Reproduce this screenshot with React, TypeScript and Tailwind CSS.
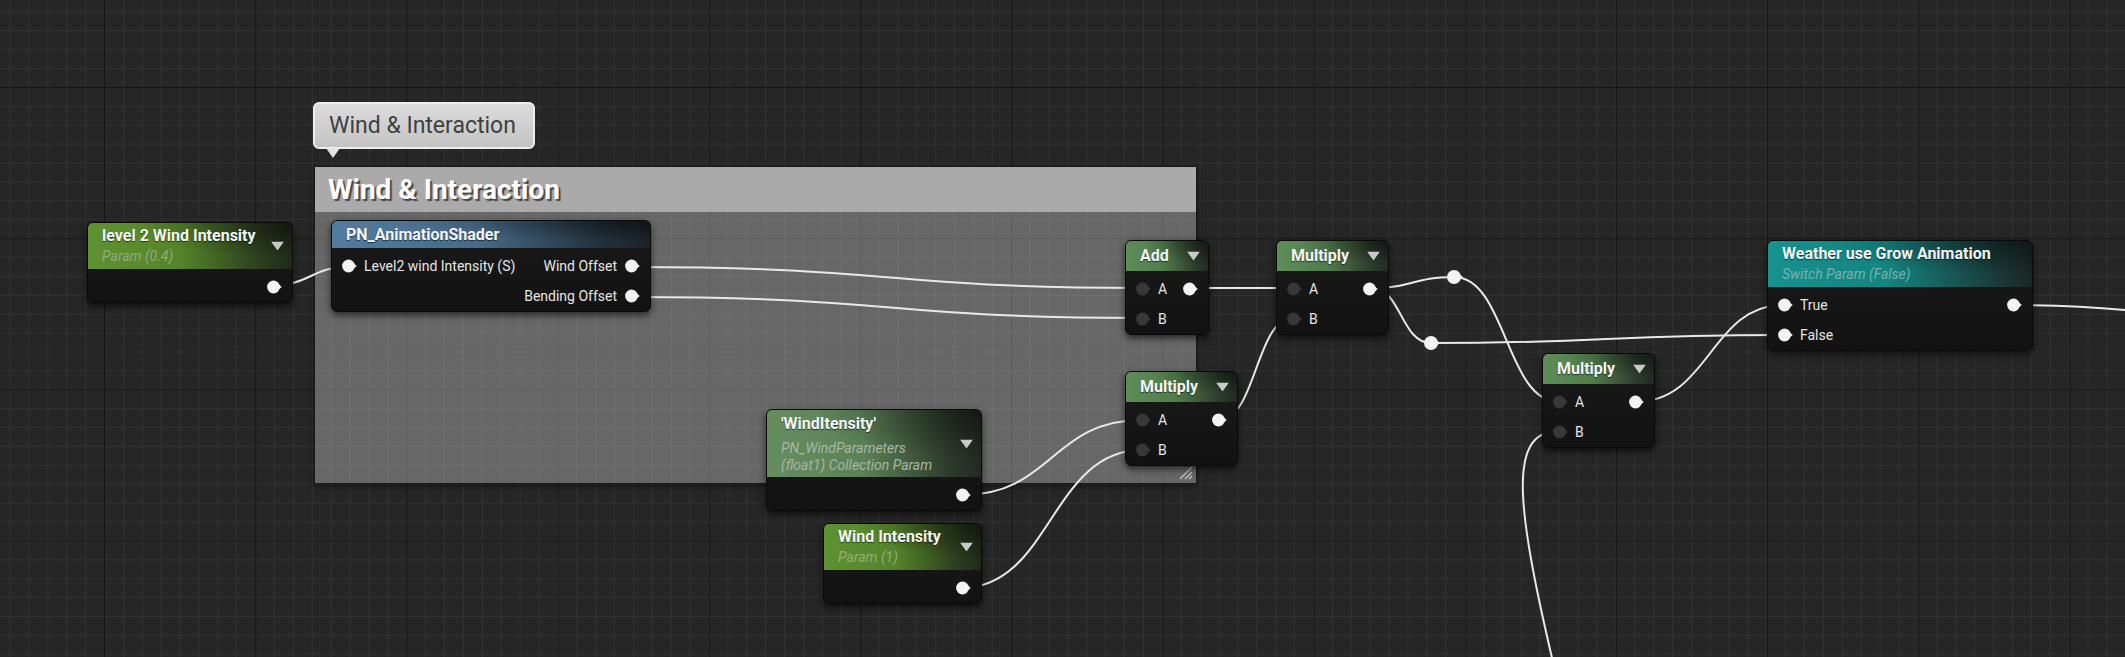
import React from "react"

type Pin = { label?: string; on?: boolean }
type Row = { left?: Pin; right?: Pin }
type Kind = "param" | "math" | "collection" | "func" | "switch"
type NodeDef = {
  id: string
  pos: string
  title: string
  sub?: string[]
  kind: Kind
  arrow?: boolean
  rows: Row[]
}

const HEAD: Record<Kind, string> = {
  param: "bg-[linear-gradient(to_right,#5f9231_0%,#548429_45%,#2b3e1e_85%,#1f2a18_100%)]",
  math: "bg-[linear-gradient(to_right,#5d8d59_0%,#507c4c_45%,#2c3b2b_85%,#222a22_100%)]",
  collection: "bg-[linear-gradient(to_right,#668d60_0%,#5b8156_45%,#2e3b2d_85%,#232923_100%)]",
  func: "bg-[linear-gradient(to_right,#527c9e_0%,#466b89_45%,#22303c_85%,#1b2229_100%)]",
  switch: "bg-[linear-gradient(to_right,#16928f_0%,#138481_45%,#1a3d3c_85%,#1b2726_100%)]",
}

const SUB: Record<Kind, string> = {
  param: "text-[#94aa80]",
  math: "text-[#a0b49c]",
  collection: "text-[#a6b8a0]",
  func: "text-[#a6b8c8]",
  switch: "text-[#78b2ad]",
}

const nodes: NodeDef[] = [
  {
    id: "lvl2",
    pos: "left-[87px] top-[222px] w-[206px]",
    title: "level 2 Wind Intensity",
    sub: ["Param (0.4)"],
    kind: "param",
    arrow: true,
    rows: [{ right: { on: true } }],
  },
  {
    id: "pn",
    pos: "left-[331px] top-[220px] w-[320px]",
    title: "PN_AnimationShader",
    kind: "func",
    rows: [
      { left: { label: "Level2 wind Intensity (S)", on: true }, right: { label: "Wind Offset", on: true } },
      { right: { label: "Bending Offset", on: true } },
    ],
  },
  {
    id: "add",
    pos: "left-[1125px] top-[240px] w-[84px]",
    title: "Add",
    kind: "math",
    arrow: true,
    rows: [{ left: { label: "A" }, right: { on: true } }, { left: { label: "B" } }],
  },
  {
    id: "mul1",
    pos: "left-[1276px] top-[240px] w-[113px]",
    title: "Multiply",
    kind: "math",
    arrow: true,
    rows: [{ left: { label: "A" }, right: { on: true } }, { left: { label: "B" } }],
  },
  {
    id: "mul2",
    pos: "left-[1125px] top-[371px] w-[113px]",
    title: "Multiply",
    kind: "math",
    arrow: true,
    rows: [{ left: { label: "A" }, right: { on: true } }, { left: { label: "B" } }],
  },
  {
    id: "mul3",
    pos: "left-[1542px] top-[353px] w-[113px]",
    title: "Multiply",
    kind: "math",
    arrow: true,
    rows: [{ left: { label: "A" }, right: { on: true } }, { left: { label: "B" } }],
  },
  {
    id: "coll",
    pos: "left-[766px] top-[409px] w-[216px]",
    title: "'WindItensity'",
    sub: ["PN_WindParameters", "(float1) Collection Param"],
    kind: "collection",
    arrow: true,
    rows: [{ right: { on: true } }],
  },
  {
    id: "wind",
    pos: "left-[823px] top-[523px] w-[159px]",
    title: "Wind Intensity",
    sub: ["Param (1)"],
    kind: "param",
    arrow: true,
    rows: [{ right: { on: true } }],
  },
  {
    id: "weather",
    pos: "left-[1767px] top-[240px] w-[266px]",
    title: "Weather use Grow Animation",
    sub: ["Switch Param (False)"],
    kind: "switch",
    rows: [{ left: { label: "True", on: true }, right: { on: true } }, { left: { label: "False", on: true } }],
  },
]

const wires = [
  "M273 285 C311 285, 311 267, 349 267",
  "M632 267 C890 267, 890 288, 1143 288",
  "M632 297 C890 297, 890 318, 1143 318",
  "M1190 288 L1293 288",
  "M962 495 C1052 495, 1052 420, 1142 420",
  "M961 588 C1051 588, 1051 450, 1142 450",
  "M1219 420 C1256 420, 1256 318, 1293 318",
  "M1372 288 C1413 288, 1413 277, 1454 277",
  "M1372 288 C1401 288, 1401 343, 1431 343",
  "M1454 277 C1506 277, 1506 402, 1559 402",
  "M1431 343 C1607 343, 1607 335, 1784 335",
  "M1635 402 C1710 402, 1710 305, 1784 305",
  "M2012 305 C2200 305, 2250 340, 2400 340",
  "M1559 431 C1505 431, 1516 510, 1562 700",
]

function PinDot({ on }: { on?: boolean }) {
  const c = on ? "#f3f3f3" : "#383838"
  return (
    <svg width="15" height="14" viewBox="0 0 15 14" className="shrink-0">
      <circle cx="6.5" cy="7" r="6.4" fill={c} />
      <path d="M11.4 4.2 L14.8 7 L11.4 9.8 Z" fill={c} />
    </svg>
  )
}

function GraphNode({ n }: { n: NodeDef }) {
  const two = n.sub && n.sub.length > 1
  const pad = !n.sub
    ? n.kind === "func"
      ? "pt-[4px] pb-[3px]"
      : "py-[5px]"
    : two
      ? "pt-[4px] pb-[4px]"
      : "pt-[3px] pb-[3px]"
  return (
    <div
      className={`absolute ${n.pos} overflow-hidden rounded-[6px] border border-[#090909] bg-[linear-gradient(to_bottom,#1a1a1a,#121212)] shadow-[0_3px_7px_rgba(0,0,0,0.65)]`}
    >
      <div className={`relative ${HEAD[n.kind]} ${pad} pl-[14px] pr-[26px]`}>
        <div className="absolute inset-0 bg-[radial-gradient(ellipse_at_top_right,rgba(0,0,0,0.45),transparent_55%)]" />
        <div className="relative whitespace-nowrap text-[16px] font-bold leading-[20px] text-[#f5f5f5] [text-shadow:0_1px_1px_rgba(0,0,0,0.6)]">
          {n.title}
        </div>
        {n.sub && (
          <div className={`relative ${two ? "mt-[6px]" : ""}`}>
            {n.sub.map((s) => (
              <div
                key={s}
                className={`whitespace-nowrap text-[14px] italic ${two ? "leading-[16.5px]" : "leading-[20px]"} ${SUB[n.kind]}`}
              >
                {s}
              </div>
            ))}
          </div>
        )}
        {n.arrow && (
          <svg width="13" height="9" viewBox="0 0 13 9" className="absolute right-[8px] top-1/2 -translate-y-1/2">
            <path d="M0 0 L13 0 L6.5 9 Z" fill="#c9c9c9" />
          </svg>
        )}
      </div>
      <div className="pt-[3px]">
        {n.rows.map((r, i) => (
          <div key={i} className="flex h-[30px] items-center justify-between">
            {r.left ? (
              <div className="flex items-center gap-[7px] pl-[10px]">
                <PinDot on={r.left.on} />
                <span className="whitespace-nowrap text-[14px] text-[#e6e6e6]">{r.left.label}</span>
              </div>
            ) : (
              <div />
            )}
            {r.right ? (
              <div className="flex items-center gap-[8px] pr-[10px]">
                {r.right.label && <span className="whitespace-nowrap text-[14px] text-[#e6e6e6]">{r.right.label}</span>}
                <PinDot on={r.right.on} />
              </div>
            ) : (
              <div />
            )}
          </div>
        ))}
      </div>
    </div>
  )
}

export default function App() {
  return (
    <div
      className="relative h-[657px] w-[2125px] overflow-hidden bg-[#262626] font-[Roboto,sans-serif] [background-image:linear-gradient(to_right,#141414_1px,transparent_1px),linear-gradient(to_bottom,#141414_1px,transparent_1px),linear-gradient(to_right,#323232_1px,transparent_1px),linear-gradient(to_bottom,#323232_1px,transparent_1px)] [background-position:104px_87px,104px_87px,104px_87px,104px_87px] [background-size:151.2px_151.2px,151.2px_151.2px,18.9px_18.9px,18.9px_18.9px]"
    >
      {/* comment box */}
      <div className="absolute left-[314px] top-[166px] flex h-[318px] w-[883px] flex-col border border-[#1a1a1a] shadow-[0_2px_6px_rgba(0,0,0,0.5)]">
        <div className="flex h-[45px] items-center bg-[#aaaaaa] pl-[13px]">
          <span className="text-[28px] font-bold leading-none text-white [text-shadow:2px_2px_1px_rgba(0,0,0,0.6)]">
            Wind &amp; Interaction
          </span>
        </div>
        <div className="relative flex-1 bg-white/30">
          <svg width="16" height="14" viewBox="0 0 16 14" className="absolute bottom-[3px] right-[3px]">
            <path d="M3 13 L15 1 M8 13 L15 6 M12 13 L15 10" stroke="#c8c8c8" strokeWidth="1.2" />
          </svg>
        </div>
      </div>

      {/* comment bubble */}
      <div className="absolute left-[313px] top-[102px] flex h-[47px] w-[222px] items-center rounded-[6px] border-2 border-[#eeeeee] bg-[linear-gradient(to_bottom,#dcdcdc,#c3c3c3)] pl-[14px]">
        <span className="text-[23px] leading-none text-[#404040]">Wind &amp; Interaction</span>
      </div>
      <svg width="14" height="10" viewBox="0 0 14 10" className="absolute left-[326px] top-[148px]">
        <path d="M0 0 L14 0 L7 10 Z" fill="#e4e4e4" />
      </svg>

      {/* wires */}
      <svg width="2125" height="657" className="pointer-events-none absolute inset-0">
        {wires.map((d, i) => (
          <path key={i} d={d} fill="none" stroke="#e9e9e9" strokeWidth="2" />
        ))}
        {[
          [1454, 277],
          [1431, 343],
        ].map(([x, y]) => (
          <g key={x}>
            <circle cx={x} cy={y} r="7" fill="#f3f3f3" />
            <path d={`M${x + 5} ${y - 3} L${x + 9} ${y} L${x + 5} ${y + 3} Z`} fill="#f3f3f3" />
          </g>
        ))}
      </svg>

      {nodes.map((n) => (
        <GraphNode key={n.id} n={n} />
      ))}
    </div>
  )
}
